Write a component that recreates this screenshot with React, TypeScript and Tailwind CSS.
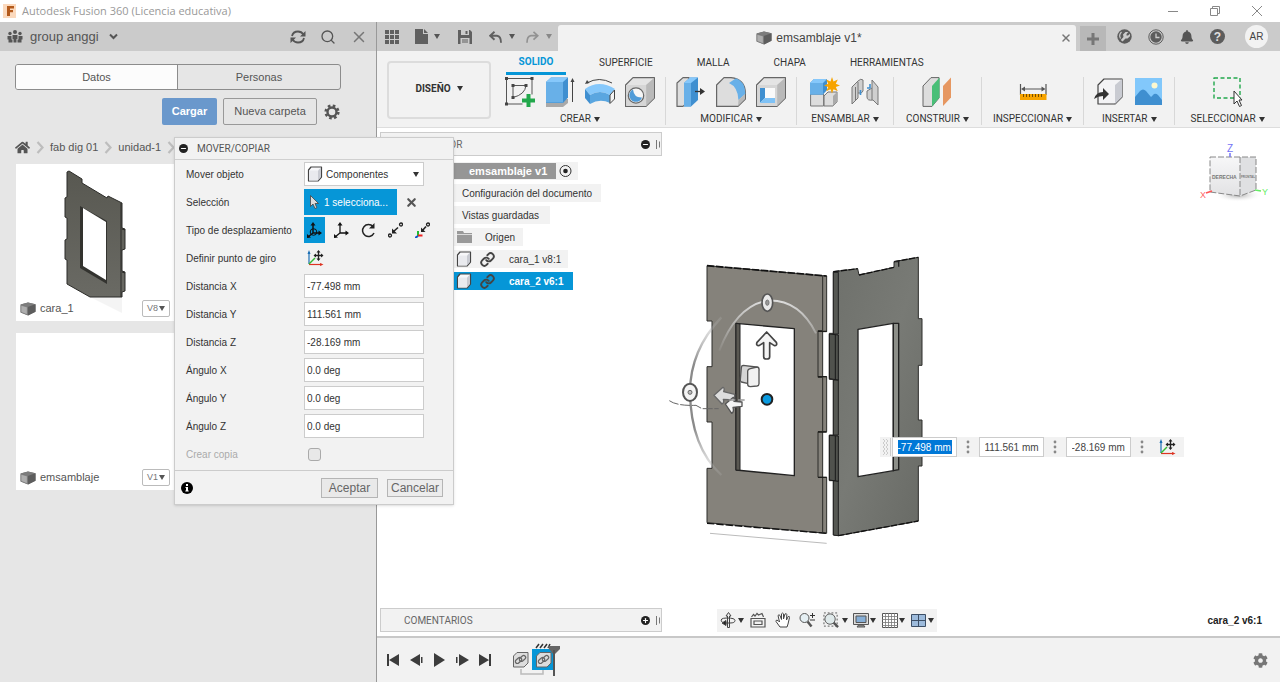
import { useState } from "react";
import type { ReactNode } from "react";
import { FaHome, FaBell, FaCog } from "react-icons/fa";
import { Link, Minus, Plus, Search, X } from "lucide-react";

const Caret = ({ className = "text-[#333]" }: { className?: string }) => (
  <svg width="6" height="5" viewBox="0 0 6 5" className={`shrink-0 ${className}`}>
    <path d="M0 0h6L3 5z" fill="currentColor" />
  </svg>
);

const CubeIcon = () => (
  <svg width="16" height="14" viewBox="0 0 16 14" className="shrink-0">
    <path d="M.5 2.500 8 .500l7.500 1.700v7.600L8 13.500l-7.500-3z" fill="#707070" />
    <path d="M.5 2.500 8 .500l7.500 1.700L7.500 5z" fill="#7c7c7c" />
    <path d="M1 3.300 7.300 5v7.700L1 10.200z" fill="#aeaeae" stroke="#777" strokeWidth=".6" />
    <path d="M8 5l7.500-2.800v7.600L8 13.500z" fill="#5d5d5d" />
  </svg>
);

const BodyIcon = () => (
  <svg width="16" height="16" viewBox="0 0 16 16" className="shrink-0">
    <path d="M4 1h10.500v10L11 15H1.500V4z" fill="#f7f7f9" stroke="#444" strokeWidth="1.200" strokeLinejoin="round" />
    <path d="M11 4.500 14 1.500v9.500l-3 3.500z" fill="#c9cbd2" />
    <path d="M2 4.500h9V14.500H2z" fill="#e9eaee" />
  </svg>
);

const AxesIcon = () => (
  <svg width="17" height="17" viewBox="0 0 17 17" className="shrink-0">
    <path d="M2 14V2" stroke="#1b6fb5" strokeWidth="1.200" />
    <path d="M.5 4 2 0l1.500 4z" fill="#1b6fb5" />
    <path d="M2 14.500h13" stroke="#d32" strokeWidth="1.200" />
    <path d="m13 13 3.500 1.500L13 16z" fill="#d32" />
    <path d="m2 14 6-6" stroke="#3b3" strokeWidth="1.400" />
    <path d="M11.500 1.500v8M7.500 5.500h8" stroke="#222" strokeWidth="1.300" />
    <path d="m11.500 0 2 2.500h-4zM11.500 11l2-2.500h-4zM6.500 5.500 9 3.500v4zM16.500 5.500 14 3.500v4z" fill="#222" />
  </svg>
);

const Handle = () => (
  <svg width="4" height="9" viewBox="0 0 4 9">
    <path d="M.5 0v9M3.500 1.500v6" stroke="#777" />
  </svg>
);

/* ---------- data panel ---------- */

const DataCard = ({ name, version, children }: { name: string; version: string; children?: ReactNode }) => (
  <div className="relative flex h-[157px] w-[158px] flex-col justify-end bg-white">
    {children}
    <div className="relative flex items-center gap-1 pb-1 pl-1 pr-1">
      <CubeIcon />
      <span className="flex-1 text-[11px] text-[#555]">{name}</span>
      <button className="flex h-[17px] items-center gap-px rounded-[2px] border border-[#bbb] bg-white px-1 text-[9px] text-[#777]">
        {version}
        <Caret className="text-[#555]" />
      </button>
    </div>
  </div>
);

const PartThumb = () => (
  <svg className="absolute left-[46px] top-[5px]" width="68" height="148" viewBox="0 0 68 148">
    <defs>
      <linearGradient id="thumb" x1="0" y1="0" x2="0" y2="1">
        <stop offset="0" stopColor="#585851" />
        <stop offset="1" stopColor="#6a6a64" />
      </linearGradient>
    </defs>
    <path d="M28 128h32v16z" fill="#f4f4f4" />
    <path
      d="M5 3 7 2 20 10v4L45 29l1-2 14 7V59l3 1v20l-3 1v21l3 1v19l-3 1v5H28L5 115V91l-2-1V71l2-1V49l-2-1V29l2-1z"
      fill="url(#thumb)"
      stroke="#2b2b28"
    />
    <path d="M59 34v94M60 60l3 1M60 103l3 1" stroke="#2b2b28" />
    <path d="M18 37 45 52v63L18 99z" fill="#33332f" />
    <path d="M21 39 44 53v58L21 97z" fill="#fff" />
  </svg>
);

const Crumb = () => (
  <svg width="8" height="13" viewBox="0 0 8 13">
    <path d="m1.500 1 5 5.500-5 5.500" fill="none" stroke="#bdbdbd" strokeWidth="2.200" />
  </svg>
);

const DataPanel = () => (
  <aside className="flex w-[376px] shrink-0 flex-col bg-[#e6e6e6]">
    <div className="flex h-[29px] items-center bg-[#cbcbcb] pl-[7px] pr-2 text-[#555]">
      <svg width="16" height="13" viewBox="0 0 16 13" fill="#555">
        <circle cx="8" cy="2" r="2" />
        <circle cx="3" cy="3.500" r="1.700" />
        <circle cx="13" cy="3.500" r="1.700" />
        <path d="M5.500 5h5v4h-1v3.500h-3V9h-1zM.5 6h4v3.500h1v3H1.500v-3h-1zM11.500 6h4v3.500h-1v3h-4v-3h1z" />
      </svg>
      <button className="ml-[7px] flex items-center gap-[10px] text-[13px]">
        group anggi
        <svg width="9" height="7" viewBox="0 0 9 7">
          <path d="m1 1.500 3.500 3.500L8 1.500" fill="none" stroke="#555" strokeWidth="2" />
        </svg>
      </button>
      <div className="ml-auto flex items-center gap-[14px]">
        <button aria-label="Actualizar">
          <svg width="16" height="14" viewBox="0 0 16 14" fill="none" stroke="#555" strokeWidth="1.800">
            <path d="M2 6Q3 1.500 8 1.500q3.500 0 5.500 3M14 8q-1 4.500-6 4.500-3.500 0-5.500-3" />
            <path d="M15.500 1v5.500H10zM.5 13V7.500H6z" fill="#555" stroke="none" />
          </svg>
        </button>
        <button aria-label="Buscar">
          <Search size={16} strokeWidth={2} />
        </button>
        <button aria-label="Cerrar panel">
          <X size={18} strokeWidth={2} className="text-[#777]" />
        </button>
      </div>
    </div>
    <div className="ml-[15px] mr-[35px] mt-[13px] flex h-[26px] overflow-hidden rounded-[3px] border border-[#8c8c8c] text-[11px] text-[#555]">
      <button className="w-1/2 border-r border-[#8c8c8c] bg-[#fcfcfc]">Datos</button>
      <button className="w-1/2">Personas</button>
    </div>
    <div className="mt-2 flex items-center justify-end gap-[6px] pr-9 text-[11px]">
      <button className="h-[27px] w-[55px] rounded-[2px] bg-[#6a98cc] font-bold text-white">Cargar</button>
      <button className="h-[27px] w-[94px] rounded-[2px] border border-[#999] text-[#555]">Nueva carpeta</button>
      <button aria-label="Configuración" className="flex w-[17px] justify-center">
        <svg width="16" height="16" viewBox="0 0 16 16">
          <circle cx="8" cy="8" r="4.500" fill="none" stroke="#555" strokeWidth="2.400" />
          <circle cx="8" cy="8" r="6.300" fill="none" stroke="#555" strokeWidth="2.600" strokeDasharray="2.600 2.348" />
        </svg>
      </button>
    </div>
    <nav className="mt-[13px] flex h-[18px] items-center gap-[6px] pl-[15px] text-[11px] text-[#555]">
      <a href="#inicio" aria-label="Inicio">
        <FaHome size={15} />
      </a>
      <Crumb />
      <a href="#fab">fab dig 01</a>
      <Crumb />
      <a href="#unidad">unidad-1</a>
      <Crumb />
    </nav>
    <div className="mt-2 flex flex-col gap-3 pl-4">
      <DataCard name="cara_1" version="V8">
        <PartThumb />
      </DataCard>
      <DataCard name="emsamblaje" version="V1" />
    </div>
  </aside>
);

/* ---------- application bar ---------- */

const AppBar = () => (
  <div className="flex h-[29px] items-stretch bg-[#cbcbcb] text-[#555]">
    <div className="flex w-[181px] shrink-0 items-center pl-2">
      <button aria-label="Panel de datos">
        <svg width="14" height="14" viewBox="0 0 14 14" fill="#606060">
          <path d="M0 0h4v4H0zM5 0h4v4H5zM10 0h4v4h-4zM0 5h4v4H0zM5 5h4v4H5zM10 5h4v4h-4zM0 10h4v4H0zM5 10h4v4H5zM10 10h4v4h-4z" />
        </svg>
      </button>
      <button aria-label="Archivo" className="ml-4 flex items-center gap-[6px]">
        <svg width="13" height="15" viewBox="0 0 13 15" fill="#606060">
          <path d="M0 0h8v5h5v10H0zM9 0l4 4H9z" />
        </svg>
        <Caret className="text-[#555]" />
      </button>
      <button aria-label="Guardar" className="ml-[18px]">
        <svg width="14" height="14" viewBox="0 0 14 14">
          <path d="M0 0h12l2 2v12H0z" fill="#606060" />
          <path d="M3 0h8v5H3zM2.500 8h9v6h-9z" fill="#cbcbcb" />
          <path d="M7.500 1h2v3h-2zM4 9.500h6v1H4zM4 11.500h6v1H4z" fill="#606060" />
        </svg>
      </button>
      <button aria-label="Deshacer" className="ml-[17px] flex items-center gap-[7px]">
        <svg width="13" height="12" viewBox="0 0 13 12" fill="none" stroke="#606060" strokeWidth="1.900">
          <path d="M5.500.8 1.200 4.700l4.300 4M1.500 4.700H8q4 .5 4 7" />
        </svg>
        <Caret className="text-[#555]" />
      </button>
      <button aria-label="Rehacer" className="ml-[11px] flex items-center gap-[7px]">
        <svg width="13" height="12" viewBox="0 0 13 12" fill="none" stroke="#929292" strokeWidth="1.700">
          <path d="m7.500.8 4.300 3.900-4.300 4M11.500 4.700H5q-4 .5-4 7" />
        </svg>
        <Caret className="text-[#888]" />
      </button>
    </div>
    <div className="mt-[3px] flex flex-1 items-center rounded-t-[3px] bg-[#f2f2f2] pr-1">
      <div className="flex flex-1 items-center justify-center gap-1 text-[12px] text-[#444]">
        <CubeIcon />
        emsamblaje v1*
      </div>
      <button aria-label="Cerrar documento">
        <X size={12} strokeWidth={3} className="text-[#777]" />
      </button>
    </div>
    <button aria-label="Documento nuevo" className="ml-1 mt-1 flex w-[26px] items-center justify-center bg-[#b8b8b8]">
      <svg width="12" height="12" viewBox="0 0 12 12">
        <path d="M6 0v12M0 6h12" stroke="#777" strokeWidth="3" />
      </svg>
    </button>
    <div className="flex items-center gap-4 pl-[11px] pr-3">
      <button aria-label="Extensiones">
        <svg width="15" height="15" viewBox="0 0 15 15">
          <circle cx="7.500" cy="7.500" r="7.200" fill="#5c5c5c" />
          <path d="M4.500 3A5.300 5.300 0 0 0 3.500 9.500" fill="none" stroke="#cbcbcb" strokeWidth="1.200" />
          <path d="M6 5.500 8.500 3h2.800L9.500 5v1.500H11l2-1.800v2.500L10.500 9.500H8.500L5.500 12.500 3.800 11 6.500 8z" fill="#cbcbcb" />
        </svg>
      </button>
      <button aria-label="Estado del trabajo">
        <svg width="16" height="16" viewBox="0 0 16 16">
          <circle cx="8" cy="8" r="7.200" fill="none" stroke="#5c5c5c" />
          <circle cx="8" cy="8" r="5.700" fill="#5c5c5c" />
          <path d="M8 4.500v4h3.500" fill="none" stroke="#cbcbcb" strokeWidth="1.300" />
        </svg>
      </button>
      <button aria-label="Notificaciones">
        <FaBell size={14} />
      </button>
      <button aria-label="Ayuda" className="flex h-[15px] w-[15px] items-center justify-center rounded-full bg-[#5c5c5c] text-[12px] font-bold leading-none text-[#e0e0e0]">
        ?
      </button>
      <button className="ml-1 flex h-[23px] w-[23px] items-center justify-center rounded-full bg-[#f2f2f2] text-[10px] text-[#444]">
        AR
      </button>
    </div>
  </div>
);

/* ---------- ribbon icons ---------- */

const RibbonSvg = ({ children }: { children: ReactNode }) => (
  <svg width="30" height="30" viewBox="0 0 30 30" strokeLinejoin="round">
    {children}
  </svg>
);

const SketchIcon = () => (
  <RibbonSvg>
    <path d="M1.500 1.500h25.500v16M1.500 1.500v25.500h16" fill="none" stroke="#555" />
    <path d="M8 8.500h13q-1 9-13 12z" fill="none" stroke="#555" />
    <path d="M0 0h3v3H0zM25.500 0h3v3h-3zM0 25.500h3v3H0zM6.500 7h3v3h-3zM19.500 7h3v3h-3zM6.500 19h3v3h-3z" fill="#444" />
    <path d="M21.500 17h4v4.500h4.500v4h-4.500v4.500h-4v-4.500H17v-4h4.500z" fill="#22a84c" />
  </RibbonSvg>
);

const ExtrudeIcon = () => (
  <RibbonSvg>
    <path d="m1 26 5-4h17v4l-5 4H1z" fill="#a9a9a9" />
    <path d="M1 5 6 .500h17v20L18 26H1z" fill="#3f8fd0" />
    <path d="M1 5h17v20.500H1z" fill="#68b0e8" />
    <path d="M1 5 6 .500h17L18 5z" fill="#86c8fb" />
    <path d="M27.500 25V4" stroke="#444" />
    <path d="m25.500 5 2-4 2 4z" fill="#444" />
  </RibbonSvg>
);

const RevolveIcon = () => (
  <RibbonSvg>
    <path d="M2 6Q14-1 27 6" fill="none" stroke="#444" />
    <path d="m0 7 2-4 2.500 3z" fill="#444" />
    <path d="M0 12q14-10 30 0l-5 6q-10-6-20 0z" fill="#86c8fb" />
    <path d="M0 12 5 18v9L0 21z" fill="#3f8fd0" />
    <path d="M5 18q10-6 20 0v8q-10-5-20 1z" fill="#5aa6e0" />
    <path d="m25 18 4.500-5v9L25 26.500z" fill="#f4f4f4" stroke="#444" />
  </RibbonSvg>
);

const GrayBlock = () => (
  <>
    <path d="M.600 8 8 .600h21.400v20.500L21 29.400H.600z" fill="#e4e4e4" stroke="#666" strokeWidth="1.200" />
    <path d="M21 8 29 1v20l-8 8z" fill="#b9b9b9" />
    <path d="M1.200 8h20v21h-20z" fill="#d6d6d6" />
  </>
);

const HoleIcon = () => (
  <RibbonSvg>
    <GrayBlock />
    <circle cx="11" cy="18.500" r="7.700" fill="#f6f6f6" stroke="#666" strokeWidth="1.200" />
    <path d="M8 12.500a6.500 6.500 0 1 0 9 8Q9 21 8 12.500z" fill="#4f9bd8" />
  </RibbonSvg>
);

const PressPullIcon = () => (
  <RibbonSvg>
    <path d="M1 6 7 .600h6V24l-6 5.400H1z" fill="#ddd" stroke="#666" strokeWidth="1.200" />
    <path d="M8 6 14 .500h8V23l-7 6.500H8z" fill="#3f8fd0" />
    <path d="M8 6h7v23.500H8z" fill="#68b0e8" />
    <path d="M8 6 14 .500h8L15 6z" fill="#86c8fb" />
    <path d="M19 14.500h6" stroke="#333" strokeWidth="1.300" />
    <path d="m24 11 5 3.500-5 3.500z" fill="#333" />
  </RibbonSvg>
);

const FilletIcon = () => (
  <RibbonSvg>
    <path d="M.600 8 8 .600h7Q29 2 29.400 16v6L22 29.400H.600z" fill="#ddd" stroke="#666" strokeWidth="1.200" />
    <path d="M13 6 20 1.200Q29 4 29.400 17l-7 6Q22 10 13 6z" fill="#68b0e8" />
    <path d="m22.500 23 6.500-6v5l-7 7z" fill="#b9b9b9" />
  </RibbonSvg>
);

const ShellIcon = () => (
  <RibbonSvg>
    <GrayBlock />
    <path d="M4 11h15v15H4z" fill="#fafafa" />
    <path d="M4 11h5v10l-5 5z" fill="#3f8fd0" />
    <path d="m4 26 5-5h10v5z" fill="#7fc2f6" />
  </RibbonSvg>
);

const ComponentIcon = () => (
  <RibbonSvg>
    <path d="M.600 17h13v12h-13zM14 19l4-4h9v10l-4 4h-9z" fill="#ddd" stroke="#777" />
    <path d="m23 19 4-4v10l-4 4z" fill="#aaa" />
    <path d="m0 6 4-4h13v11l-4 4.500H0z" fill="#3f8fd0" />
    <path d="M0 6h13v11.500H0z" fill="#68b0e8" />
    <path d="m0 6 4-4h13l-4 4z" fill="#86c8fb" />
    <path d="m22 0 1.500 4.500 4.300-2-2 4.200L30 8.500l-4.200 1.600 2 4.200-4.300-2L22 16.500l-1.500-4.200-4.300 2 2-4.200L14 8.500l4.200-1.800-2-4.200 4.300 2z" fill="#f7a400" />
  </RibbonSvg>
);

const JointIcon = () => (
  <RibbonSvg>
    <path d="M2 10 8 4q3-3 5-1v11q-1 3-5 2v5l-6 6z" fill="#cfcfcf" stroke="#777" />
    <path d="M5.500 10v14M8 5v11" stroke="#777" />
    <path d="m28 28-5-5q-6 1-6-3v-6l5-3V3l6 7z" fill="#cfcfcf" stroke="#777" />
    <path d="M22 11v12" stroke="#777" />
    <path d="M10.500 13v5M20 7v4h-3" fill="none" stroke="#3f8fd0" strokeWidth="1.600" />
  </RibbonSvg>
);

const PlaneIcon = () => (
  <RibbonSvg>
    <path d="M1 9 9 .600h8V21l-7 8.400H1z" fill="#ddd" stroke="#666" />
    <path d="m10 9 7.500-8.400v20L10 29.400z" fill="#49bf78" />
    <path d="m21 9 8-8.400v20l-8 8.400z" fill="#e69761" />
  </RibbonSvg>
);

const MeasureIcon = () => (
  <RibbonSvg>
    <path d="M2.500 7v11M28 7v11M5 12h20" stroke="#555" strokeWidth="1.200" />
    <path d="m3 12 4-2.500v5zM27.500 12l-4-2.500v5z" fill="#555" />
    <path d="M2 17h26.500v6H2z" fill="#f7a400" />
    <path d="M5.500 17v3M8.500 17v3M11.500 17v3M14.500 17v3M17.500 17v3M20.500 17v3M23.500 17v3" stroke="#774e00" />
  </RibbonSvg>
);

const DeriveIcon = () => (
  <RibbonSvg>
    <path d="m4 8 6-6h18v18l-7 7H4z" fill="#f3f3f5" stroke="#444" strokeWidth="1.200" />
    <path d="m21 8 7-6v18l-7 7z" fill="#c9cbd2" />
    <path d="M0 22q2-7 9-7v-4l6 6-6 6v-4q-5 0-9 3z" fill="#333" />
  </RibbonSvg>
);

const CanvasIcon = () => (
  <RibbonSvg>
    <path d="M1 1h27v27H1z" fill="#82c8fb" />
    <path d="M1 20 6 14q3-3 6 0l5 6 3-3q2-1 4 1l4 5v5H1z" fill="#3f8fd0" />
    <circle cx="20.500" cy="8.500" r="3" fill="#fdf8cf" />
  </RibbonSvg>
);

const SelectIcon = () => (
  <RibbonSvg>
    <path d="M1 1h26v20H1z" fill="none" stroke="#22a84c" strokeWidth="1.400" strokeDasharray="4 2.500" />
    <path d="M21 14v13l3-3 2.500 5.500 2-1-2.500-5.500h3z" fill="#fff" stroke="#333" />
  </RibbonSvg>
);

const groups = [
  { label: "CREAR", icons: [SketchIcon, ExtrudeIcon, RevolveIcon, HoleIcon], pad: "px-[10px]" },
  { label: "MODIFICAR", icons: [PressPullIcon, FilletIcon, ShellIcon], pad: "px-[10px]" },
  { label: "ENSAMBLAR", icons: [ComponentIcon, JointIcon], pad: "px-[13px]" },
  { label: "CONSTRUIR", icons: [PlaneIcon], pad: "px-3" },
  { label: "INSPECCIONAR", icons: [MeasureIcon], pad: "px-[11px]" },
  { label: "INSERTAR", icons: [DeriveIcon, CanvasIcon], pad: "px-[10px]" },
  { label: "SELECCIONAR", icons: [SelectIcon], pad: "flex-1" },
];

const Ribbon = () => (
  <div className="flex h-[77px] border-b border-[#ddd] bg-[#f2f2f2] font-[Roboto,sans-serif] text-[10px] text-[#333]">
    <button className="ml-[10px] mt-[10px] flex h-[58px] w-[104px] shrink-0 items-center justify-center gap-[6px] rounded-[4px] border-2 border-[#dcdcdc] pb-1 font-bold">
      DISEÑO
      <Caret />
    </button>
    <div className="flex flex-1 flex-col">
      <div className="flex h-6 items-stretch gap-[33px] pl-[15px]">
        <button className="w-[60px] border-b-[3px] border-[#0696d7] font-bold text-[#0696d7]">SOLIDO</button>
        <button className="pb-[2px]">SUPERFICIE</button>
        <button className="ml-[11px] pb-[2px]">MALLA</button>
        <button className="ml-[11px] pb-[2px]">CHAPA</button>
        <button className="ml-[11px] pb-[2px]">HERRAMIENTAS</button>
      </div>
      <div className="flex pl-1 pt-[2px]">
        {groups.map(({ label, icons, pad }) => (
          <div key={label} className={`flex h-12 flex-col items-center border-r border-[#d8d8d8] last:border-r-0 ${pad}`}>
            <div className="flex gap-[10px]">
              {icons.map((Icon, i) => (
                <button key={i} aria-label={`${label} ${i + 1}`}>
                  <Icon />
                </button>
              ))}
            </div>
            <button className="mt-[5px] flex items-center gap-[3px] whitespace-nowrap leading-[14px]">
              {label}
              <Caret />
            </button>
          </div>
        ))}
      </div>
    </div>
  </div>
);

/* ---------- canvas ---------- */

const Model = () => (
  <svg className="absolute left-[283px] top-[112px]" width="300" height="310" viewBox="0 0 900 930" strokeLinejoin="round">
    <defs>
      <linearGradient id="right" x1="0" y1="0" x2="1" y2="1">
        <stop offset="0" stopColor="#6e706b" />
        <stop offset=".5" stopColor="#787a75" />
        <stop offset="1" stopColor="#686a65" />
      </linearGradient>
      <linearGradient id="arc" x1="0" y1="0" x2="0" y2="1">
        <stop offset="0" stopColor="#bbb" stopOpacity=".2" />
        <stop offset=".3" stopColor="#8a8a8a" />
        <stop offset=".7" stopColor="#8a8a8a" />
        <stop offset="1" stopColor="#bbb" stopOpacity=".2" />
      </linearGradient>
      <linearGradient id="arcTop" x1="0" y1="0" x2="0" y2="1">
        <stop offset="0" stopColor="#ddd" />
        <stop offset="1" stopColor="#ccc" stopOpacity=".1" />
      </linearGradient>
    </defs>
    {/* left board */}
    <path
      d="M141 77 500 108V275H488V410H500V575H488V712H500V880L141 848V685H156V546H141V380H156V243H141Z"
      fill="#85827b"
      stroke="#2c2c2a"
      strokeWidth="3"
    />
    <path d="M141 77 500 108" stroke="#111" strokeWidth="5" strokeDasharray="22 5" />
    <path d="M141 850 500 880" stroke="#111" strokeWidth="4" strokeDasharray="22 6" />
    <path d="M488 108V272H474V412H488V575H474V712H488V878" fill="none" stroke="#2c2c2a" strokeWidth="3" />
    <path d="M474 274H500M474 410H500M474 576H500M474 712H500" stroke="#1c1c1a" strokeWidth="4" />
    <path d="M228 250 403 266V707L228 690Z" fill="#fff" stroke="#222" strokeWidth="4" />
    <path d="M228 250 240 252V691L228 690Z" fill="#5a5852" stroke="#222" strokeWidth="3" />
    {/* right board */}
    <path
      d="M520 95 593 86 597 105 702 82V65L775 52V236H786V376H775V540H786V678H775V843L535 887 520 885V722H508V585H520V418H508V280H520Z"
      fill="url(#right)"
      stroke="#2c2c2a"
      strokeWidth="3"
    />
    <path d="M520 97H535V282H520ZM520 420H535V585H520ZM520 722H535V887L520 885Z" fill="#565853" stroke="#222" strokeWidth="3" />
    <path d="M508 282 535 285V420L508 416ZM508 586 535 588V724L508 720Z" fill="#50524d" stroke="#1a1a1a" strokeWidth="3" />
    <path d="M526 284V418M526 588V722" stroke="#1a1a1a" strokeWidth="3" />
    <path d="M520 95 593 86M597 105 702 82M702 65 775 52M535 887 775 843" fill="none" stroke="#111" strokeWidth="4" strokeDasharray="18 5" />
    <path d="M702 65H716V80" fill="none" stroke="#222" strokeWidth="4" />
    <path d="M594 268 700 250V692L594 710Z" fill="#fff" stroke="#222" strokeWidth="4" />
    <path d="M700 250H716V689L700 692Z" fill="#8d8f89" stroke="#222" strokeWidth="4" />
    <path d="M150 880 500 910" stroke="#bbb" strokeWidth="3" />
    {/* rotation arcs */}
    <path d="M178 332Q228 200 320 182 416 176 468 280" fill="none" stroke="url(#arcTop)" strokeWidth="6" />
    <path d="M184 232Q91 330 90 455 92 620 184 705" fill="none" stroke="url(#arc)" strokeWidth="7" />
    <path d="M28 482Q50 498 108 496L126 506 176 506" fill="none" stroke="#666" strokeWidth="3" strokeDasharray="30 5" />
    <ellipse cx="322" cy="188" rx="16" ry="26" fill="#e9e9e9" stroke="#555" strokeWidth="5" />
    <ellipse cx="322" cy="188" rx="5" ry="8" fill="#999" stroke="#777" strokeWidth="3" />
    <ellipse cx="90" cy="457" rx="21" ry="26" fill="#f4f4f4" stroke="#555" strokeWidth="6" />
    <circle cx="90" cy="457" r="6" fill="#bbb" stroke="#666" strokeWidth="3" />
    {/* move arrows */}
    <path d="M320 276 349 307Q353 317 343 317L329 308V350Q329 357 320 357T311 350V308L297 317Q287 317 291 307Z" fill="#f4f4f4" stroke="#444" strokeWidth="5" />
    <path d="M162 466 189 442Q195 444 191 455L224 463V480L190 478Q194 488 186 492Z" fill="#ddd" stroke="#666" strokeWidth="4" />
    <path d="M196 492 220 472Q226 476 222 484L246 486V499L219 502Q223 516 215 520Z" fill="#f4f4f4" stroke="#555" strokeWidth="4" />
    <path d="M206 480 260 480" stroke="#999" strokeWidth="4" strokeDasharray="20 8" />
    <path d="M250 376 288 381Q296 382 296 390L262 430 244 426Q240 424 241 418L244 384Q244 376 250 376Z" fill="#d4d4d4" stroke="#555" strokeWidth="4" />
    <path d="M271 386 291 381Q297 381 297 388V431Q297 437 291 438L271 440Q263 440 263 433V394Q263 388 271 386Z" fill="#f1f1f1" stroke="#555" strokeWidth="4" />
    <circle cx="321" cy="478" r="16" fill="#0a9be0" stroke="#222" strokeWidth="6" />
  </svg>
);

const ViewCube = () => (
  <svg className="absolute right-2 top-3" width="74" height="64" viewBox="0 0 74 64" fontFamily="Liberation Sans, sans-serif">
    <defs>
      <radialGradient id="shade">
        <stop offset="0" stopColor="#aaa" />
        <stop offset="1" stopColor="#fff" stopOpacity="0" />
      </radialGradient>
      <linearGradient id="face" x1="0" y1="0" x2="0" y2="1">
        <stop offset="0" stopColor="#f7f7f8" />
        <stop offset="1" stopColor="#e2e2e4" />
      </linearGradient>
    </defs>
    <ellipse cx="40" cy="55" rx="24" ry="7" fill="url(#shade)" />
    <path d="M12 17h31v39L12 52z" fill="url(#face)" />
    <path d="M42 17h16v33L42 56z" fill="#dfe0e2" />
    <path d="M12 17h46v33L42 56 12 52zM42 17v39" fill="none" stroke="#888" strokeDasharray="6 2" />
    <path d="M32 13v4" stroke="#7373f5" strokeWidth="1.500" />
    <path d="m8 53 6-2" stroke="#f55" strokeWidth="1.500" />
    <path d="m57 50 6 1" stroke="#6e6" strokeWidth="1.500" />
    <text x="29" y="12" fontSize="10" fill="#7373f5">Z</text>
    <text x="2" y="58" fontSize="9" fill="#f66">X</text>
    <text x="64" y="55" fontSize="9" fill="#6e6">Y</text>
    <text x="14" y="39" fontSize="5" fontWeight="bold" fill="#777">DERECHA</text>
    <text x="43" y="38" fontSize="3" fontWeight="bold" fill="#777">FRONTAL</text>
  </svg>
);

const TreeLink = () => <Link size={15} strokeWidth={3} className="text-[#444]" />;

const Browser = () => (
  <div className="w-[282px]">
    <div className="flex h-6 items-center border border-[#ccc] bg-[#f2f2f2] pl-[23px] pr-px font-[Roboto,sans-serif] text-[10px] text-[#666]">
      <span className="flex-1">NAVEGADOR</span>
      <button aria-label="Contraer navegador" className="mr-[6px] flex h-[9px] w-[9px] items-center justify-center rounded-full bg-[#222] text-white">
        <Minus size={7} strokeWidth={4} />
      </button>
      <Handle />
    </div>
    <ul className="flex flex-col items-start gap-1 pt-[6px] pl-[74px] text-[10px] text-[#333]">
      <li className="flex h-[18px] items-center bg-[#f2f2f2]">
        <span className="flex h-4 items-center bg-[#969696] pl-[15px] pr-[9px] text-[11px] font-bold text-white">emsamblaje v1</span>
        <svg width="22" height="14" viewBox="0 0 22 14">
          <circle cx="9.500" cy="7" r="5.500" fill="none" stroke="#333" />
          <circle cx="9.500" cy="7" r="2.300" fill="#222" />
        </svg>
      </li>
      <li className="flex h-[18px] items-center bg-[#f2f2f2] pl-2 pr-[9px]">Configuración del documento</li>
      <li className="flex h-[18px] items-center bg-[#f2f2f2] pl-2 pr-[11px]">Vistas guardadas</li>
      <li className="flex h-[18px] items-center gap-[13px] bg-[#f2f2f2] pl-[3px] pr-2">
        <svg width="15" height="12" viewBox="0 0 15 12" fill="#999">
          <path d="M0 0h6l1 2h8v1.200H0zM0 4h15v8H0z" />
        </svg>
        Origen
      </li>
      <li className="flex h-[18px] items-center bg-[#f2f2f2] pl-[2px] pr-[7px]">
        <BodyIcon />
        <span className="ml-2 mr-[14px]">
          <TreeLink />
        </span>
        cara_1 v8:1
      </li>
      <li className="flex h-[18px] items-center bg-[#0696d7] pl-[2px] pr-[9px] font-bold text-white">
        <BodyIcon />
        <span className="ml-2 mr-[14px]">
          <TreeLink />
        </span>
        cara_2 v6:1
      </li>
    </ul>
  </div>
);

const Dots = () => (
  <svg width="4" height="14" viewBox="0 0 4 14" fill="#888">
    <circle cx="2" cy="2" r="1.400" />
    <circle cx="2" cy="7" r="1.400" />
    <circle cx="2" cy="12" r="1.400" />
  </svg>
);

const CoordinateBar = () => {
  const [coords, setCoords] = useState(["-77.498 mm", "111.561 mm", "-28.169 mm"]);

  return (
    <div className="absolute left-[503px] top-[309px] flex h-5 items-center bg-[#f2f2f2] pr-2">
      <svg className="mr-px" width="11" height="18" viewBox="0 0 11 18" fill="none" stroke="#ccc">
        <path d="m3 1 2 2-2 2 2 2-2 2 2 2-2 2 2 2-2 2M6 1l2 2-2 2 2 2-2 2 2 2-2 2 2 2-2 2M10.500 0v18" />
      </svg>
      {coords.map((value, i) => (
        <div key={i} className="flex items-center">
          <div className="flex h-5 w-[65px] items-center justify-center border border-[#ccc] bg-white">
            <input
              aria-label={`Coordenada ${i + 1}`}
              value={value}
              onChange={(e) => setCoords(coords.map((c, n) => (n === i ? e.target.value : c)))}
              className={i === 0 ? "h-[14px] w-[54px] bg-[#0078d7] text-[10px] text-white" : "h-[14px] w-[54px] text-[10px] text-[#444]"}
            />
          </div>
          <span className="mx-[9px]">
            <Dots />
          </span>
        </div>
      ))}
      <button aria-label="Definir punto de giro" className="ml-[6px]">
        <AxesIcon />
      </button>
    </div>
  );
};

const NavBar = () => (
  <div className="flex h-[23px] items-center bg-[#f2f2f2] px-[3px]">
    <button aria-label="Orbitar" className="flex items-center gap-[2px]">
      <svg width="16" height="16" viewBox="0 0 16 16" fill="none" stroke="#444">
        <path d="M7.500 15.500V4H6l2.500-3.500L11 4H9.500v11.500zM2 10Q-1 6 7 6t8 2.500-5 2.500H5" />
        <path d="m6 8.500-4 2.500 4 2.500z" fill="#222" />
      </svg>
      <Caret />
    </button>
    <button aria-label="Mirar a" className="ml-[6px]">
      <svg width="16" height="16" viewBox="0 0 16 16" fill="none" stroke="#555" strokeWidth="1.200">
        <path d="M1 6.500h14v8.500H1zM1.500 5 3.500 2.500 5 4l2-2.500L8.500 3 12 1.500 13.500 5M4 9h8v3.500H4z" />
      </svg>
    </button>
    <button aria-label="Encuadre" className="ml-[9px]">
      <svg width="16" height="16" viewBox="0 0 16 16" fill="#fff" stroke="#444" strokeLinejoin="round">
        <path d="M5 15 1 9.500q-.5-2 2-1l1.500 1.500L3 3.500q1-1.500 2 0l1.500 4V1.800q1-1.500 2 0V7L10 2q1.500-1 1.800.500L11.500 8l1.700-3.500q1.500-.5 1.300 1L13 12l-1 3z" />
      </svg>
    </button>
    <button aria-label="Zoom" className="ml-2">
      <svg width="16" height="16" viewBox="0 0 16 16" fill="none" stroke="#555">
        <path d="m8.500 9.500 4 5" strokeWidth="2.500" />
        <circle cx="5.500" cy="6" r="4.500" fill="#e5eff3" />
        <path d="M13.500 1v5M11 3.500h5M11 8h5" stroke="#333" />
      </svg>
    </button>
    <button aria-label="Ajustar" className="ml-2 flex items-center gap-[3px]">
      <svg width="16" height="16" viewBox="0 0 17 17" fill="none" stroke="#555">
        <path d="M1 1h14v14H1z" strokeDasharray="2 2" />
        <path d="m11 11 5 5" strokeWidth="2.500" />
        <circle cx="7.500" cy="7.500" r="5.500" fill="#dfe9ea" />
      </svg>
      <Caret />
    </button>
    <button aria-label="Visualización" className="ml-[5px] flex items-center gap-px">
      <svg width="16" height="15" viewBox="0 0 16 15" stroke="#555">
        <path d="M.5.5h15v11H.5z" fill="#ddd" />
        <path d="M3 3h10v6.500H3z" fill="#86aed6" />
        <path d="M4 14h8l-1.500-2h-5z" fill="#999" />
      </svg>
      <Caret />
    </button>
    <button aria-label="Rejilla" className="ml-[6px] flex items-center gap-px">
      <svg width="16" height="15" viewBox="0 0 16 15" fill="#fff" stroke="#555">
        <path d="M.5.5h15v14H.5z" />
        <path d="M3.500 0v15M6.500 0v15M9.500 0v15M12.500 0v15M0 3.500h16M0 6.500h16M0 9.500h16M0 12.500h16" stroke="#777" strokeWidth=".8" />
      </svg>
      <Caret />
    </button>
    <button aria-label="Ventanas" className="ml-[6px] flex items-center gap-[2px]">
      <svg width="15" height="13" viewBox="0 0 15 13" fill="#9dbbdc" stroke="#3d4f66">
        <path d="M.5.500h14v12H.5zM7.500.500v12M.5 6.500h14" />
      </svg>
      <Caret />
    </button>
  </div>
);

const Canvas = () => (
  <main className="relative flex flex-1 flex-col justify-between bg-white pl-[3px] pt-1 pb-1">
    <Model />
    <ViewCube />
    <CoordinateBar />
    <Browser />
    <div className="flex items-center">
      <div className="flex h-6 w-[282px] items-center border border-[#ccc] bg-[#f2f2f2] pl-[23px] pr-px font-[Roboto,sans-serif] text-[10px] text-[#666]">
        <span className="flex-1">COMENTARIOS</span>
        <button aria-label="Expandir comentarios" className="mr-[6px] flex h-[9px] w-[9px] items-center justify-center rounded-full bg-[#222] text-white">
          <Plus size={7} strokeWidth={4} />
        </button>
        <Handle />
      </div>
      <div className="flex flex-1 items-center justify-between pl-[55px] pr-[18px]">
        <NavBar />
        <span className="text-[10px] font-bold text-[#222]">cara_2 v6:1</span>
      </div>
    </div>
  </main>
);

/* ---------- timeline ---------- */

const playback = [
  { name: "Inicio", path: "M0 1h2v12H0zM12 1v12L2 7z" },
  { name: "Paso atrás", path: "M10 1v12L0 7zM11 4h1.500v6H11z" },
  { name: "Reproducir", path: "M1 0v14L12 7z" },
  { name: "Paso adelante", path: "M3 1v12l10-6zM0 4h1.500v6H0z" },
  { name: "Fin", path: "M0 1v12l10-6zM10 1h2v12h-2z" },
];

const Timeline = () => (
  <footer className="flex h-[46px] items-center border-t-2 border-[#c8c8c8] bg-[#f2f2f2] pl-[10px] pr-[12px]">
    <div className="flex gap-[10px]">
      {playback.map(({ name, path }) => (
        <button key={name} aria-label={name}>
          <svg width="13" height="14" viewBox="0 0 13 14" fill="#3c3c3c">
            <path d={path} />
          </svg>
        </button>
      ))}
    </div>
    <svg className="ml-5" width="50" height="36" viewBox="0 0 50 36">
      <path d="M9 27v5h22v-5" fill="none" stroke="#bbb" strokeWidth="1.500" />
      <path d="M20 7h21v21H20z" fill="#0696d7" />
      {[1, 24].map((x) => (
        <g key={x} transform={`translate(${x} 10)`}>
          <path d="M4 .5h11V11l-4 4H.5V4z" fill="#ddd" stroke="#666" />
          <rect x="2" y="6.500" width="7" height="4" rx="2" transform="rotate(-40 5.500 8.500)" fill="none" stroke="#666" strokeWidth="1.200" />
          <rect x="6" y="4.500" width="7" height="4" rx="2" transform="rotate(-40 9.500 6.500)" fill="none" stroke="#666" strokeWidth="1.200" />
        </g>
      ))}
      <path d="m24 6 3-4M28 6l3-4M32 6l3-4M36 6l2-4" stroke="#333" strokeWidth="1.500" />
      <path d="M36 4h12v3l-5 5h-2l-4-5z" fill="#666" />
      <path d="M42 8v26" stroke="#555" strokeWidth="2" />
    </svg>
    <button aria-label="Preferencias" className="ml-auto text-[#777]">
      <FaCog size={15} />
    </button>
  </footer>
);

/* ---------- move / copy dialog ---------- */

const moveTypes = [
  {
    name: "Movimiento libre",
    art: (
      <g stroke="#111" fill="#111">
        <path d="M6 1v9h7M6 10l-5 4" fill="none" strokeWidth="1.500" />
        <path d="m6-1 2.500 3.500h-5zM15 10l-3.500 2.500v-5zM0 15V11l4 3.500z" stroke="none" />
        <circle cx="6.500" cy="9" r="3.300" fill="none" />
      </g>
    ),
  },
  {
    name: "Trasladar",
    art: (
      <g stroke="#111" fill="#111">
        <path d="M6 1v9h7M6 10l-5 4" fill="none" strokeWidth="1.300" />
        <path d="m6-1 2.500 3.500h-5zM15 10l-3.500 2.500v-5zM0 15V11l4 3.500z" stroke="none" />
      </g>
    ),
  },
  {
    name: "Girar",
    art: (
      <g stroke="#222">
        <path d="M12 3.500A6 6 0 1 0 13 10" fill="none" strokeWidth="1.500" />
        <path d="M13.500 0v5.500H8z" fill="#222" stroke="none" />
      </g>
    ),
  },
  {
    name: "Punto a punto",
    art: (
      <g stroke="#222" fill="none">
        <circle cx="2" cy="12.500" r="1.500" strokeWidth="1.300" />
        <circle cx="13" cy="1.500" r="1.500" strokeWidth="1.300" />
        <path d="m5 9 5-4.500" strokeWidth="1.600" />
        <path d="M4 10.500V5.500l5 5z" fill="#222" stroke="none" />
      </g>
    ),
  },
  {
    name: "Punto a posición",
    art: (
      <g fill="none">
        <path d="M3 8v5" stroke="#2b3" strokeWidth="2" />
        <path d="M3 12.500h4.500" stroke="#e22" strokeWidth="2" />
        <path d="m3 13-3 2" stroke="#15c" strokeWidth="2" />
        <circle cx="13" cy="1.500" r="1.500" stroke="#222" strokeWidth="1.300" />
        <path d="m7 8 4-4.500" stroke="#222" strokeWidth="1.600" />
        <path d="M6 9V4.500L10.500 9z" fill="#222" />
      </g>
    ),
  },
];

const fields = [
  ["Distancia X", "-77.498 mm"],
  ["Distancia Y", "111.561 mm"],
  ["Distancia Z", "-28.169 mm"],
  ["Ángulo X", "0.0 deg"],
  ["Ángulo Y", "0.0 deg"],
  ["Ángulo Z", "0.0 deg"],
];

const MoveDialog = () => {
  const [values, setValues] = useState(fields.map(([, value]) => value));
  const [moveType, setMoveType] = useState(0);

  return (
    <section className="absolute left-[174px] top-[137px] w-[280px] border border-[#ccc] bg-[#f2f2f2] text-[10px] text-[#333] shadow-sm">
      <header className="flex h-[22px] items-center gap-[9px] border-b border-[#d0d0d0] pl-1 font-[Roboto,sans-serif] text-[#555]">
        <button aria-label="Contraer" className="flex h-[9px] w-[9px] items-center justify-center rounded-full bg-[#222] text-white">
          <Minus size={7} strokeWidth={4} />
        </button>
        MOVER/COPIAR
      </header>
      <div className="pb-[2px] pl-[11px]">
        <div className="flex h-7 items-center">
          <label htmlFor="object" className="w-[118px]">Mover objeto</label>
          <div className="relative flex h-6 w-[120px] items-center border border-[#ccc] bg-white">
            <select id="object" className="h-full w-full appearance-none pl-[21px]">
              <option>Componentes</option>
            </select>
            <span className="pointer-events-none absolute left-[2px]">
              <BodyIcon />
            </span>
            <span className="pointer-events-none absolute right-1">
              <Caret />
            </span>
          </div>
        </div>
        <div className="flex h-7 items-center">
          <span className="w-[118px]">Selección</span>
          <button className="flex h-[26px] w-[93px] items-center gap-[5px] bg-[#0696d7] pl-[6px] text-[10px] text-white">
            <svg width="9" height="14" viewBox="0 0 9 14">
              <path d="M.5.500v11l2.500-2.500 2 4.500 1.800-.8L5 8.500h3.500z" fill="#ddd" stroke="#444" strokeWidth=".8" />
            </svg>
            1 selecciona...
          </button>
          <button aria-label="Borrar selección" className="ml-2">
            <X size={13} strokeWidth={4} className="text-[#555]" />
          </button>
        </div>
        <div className="flex h-7 items-center">
          <span className="w-[118px]">Tipo de desplazamiento</span>
          <div className="flex gap-[6px]">
            {moveTypes.map(({ name, art }, i) => (
              <button
                key={name}
                aria-label={name}
                onClick={() => setMoveType(i)}
                className={`flex h-[26px] w-[21px] items-center justify-center ${moveType === i ? "bg-[#0696d7]" : ""}`}
              >
                <svg width="15" height="16" viewBox="0 -1 15 16">
                  {art}
                </svg>
              </button>
            ))}
          </div>
        </div>
        <div className="flex h-7 items-center">
          <span className="w-[121px]">Definir punto de giro</span>
          <button aria-label="Punto de giro">
            <AxesIcon />
          </button>
        </div>
        {fields.map(([label], i) => (
          <div key={label} className="flex h-7 items-center">
            <label htmlFor={label} className="w-[118px]">{label}</label>
            <input
              id={label}
              value={values[i]}
              onChange={(e) => setValues(values.map((v, n) => (n === i ? e.target.value : v)))}
              className="h-6 w-[120px] border border-[#ccc] bg-white px-[2px]"
            />
          </div>
        ))}
        <div className="flex h-7 items-center text-[#aaa]">
          <label htmlFor="copy" className="w-[122px]">Crear copia</label>
          <input id="copy" type="checkbox" className="h-[13px] w-[13px] appearance-none rounded-[3px] border border-[#aaa] bg-[#e8e8e8]" />
        </div>
      </div>
      <footer className="flex h-[34px] items-center border-t border-[#ccc] pl-[6px] pr-[10px] text-[12px] text-[#666]">
        <svg width="12" height="12" viewBox="0 0 12 12" className="mr-auto">
          <circle cx="6" cy="6" r="6" fill="#000" />
          <path d="M5 2h2v2H5zM4.500 5H7v3.500h.7v1H4.300v-1H5V6h-.5z" fill="#fff" />
        </svg>
        <button className="flex h-5 w-[57px] items-center justify-center border border-[#b5b5b5] bg-[#e9e9e9]">Aceptar</button>
        <button className="ml-[9px] flex h-[18px] w-[56px] items-center justify-center border border-[#b5b5b5] bg-[#ececec]">Cancelar</button>
      </footer>
    </section>
  );
};

export default function App() {
  return (
    <div className="relative flex min-h-screen flex-col bg-white font-['Liberation_Sans',Arial,sans-serif] leading-normal">
      <header className="flex h-[22px] items-center bg-white pl-[3px] pr-[18px]">
        <svg width="13" height="14" viewBox="0 0 13 14">
          <path d="M0 0h13v14H0z" fill="#fbd9bd" />
          <path d="M4 2h7v2.500H7V6h3v2.300H7V12H4z" fill="#b35a1c" />
        </svg>
        <h1 className="ml-[6px] font-['Open_Sans',sans-serif] text-[11px] text-[#999]">Autodesk Fusion 360 (Licencia educativa)</h1>
        <div className="ml-auto flex items-center gap-8 text-[#888]">
          <button aria-label="Minimizar">
            <svg width="10" height="10" viewBox="0 0 10 10"><path d="M0 5.500h10" stroke="currentColor" /></svg>
          </button>
          <button aria-label="Restaurar">
            <svg width="10" height="10" viewBox="0 0 10 10" fill="none" stroke="currentColor">
              <path d="M.5 2.500h7v7h-7zM2.500 2.500v-2h7v7h-2" />
            </svg>
          </button>
          <button aria-label="Cerrar">
            <svg width="10" height="10" viewBox="0 0 10 10"><path d="m0 0 10 10M10 0 0 10" stroke="currentColor" /></svg>
          </button>
        </div>
      </header>
      <div className="flex flex-1">
        <DataPanel />
        <div className="flex min-w-0 flex-1 flex-col border-l border-[#999]">
          <AppBar />
          <Ribbon />
          <Canvas />
          <Timeline />
        </div>
      </div>
      <MoveDialog />
    </div>
  );
}
